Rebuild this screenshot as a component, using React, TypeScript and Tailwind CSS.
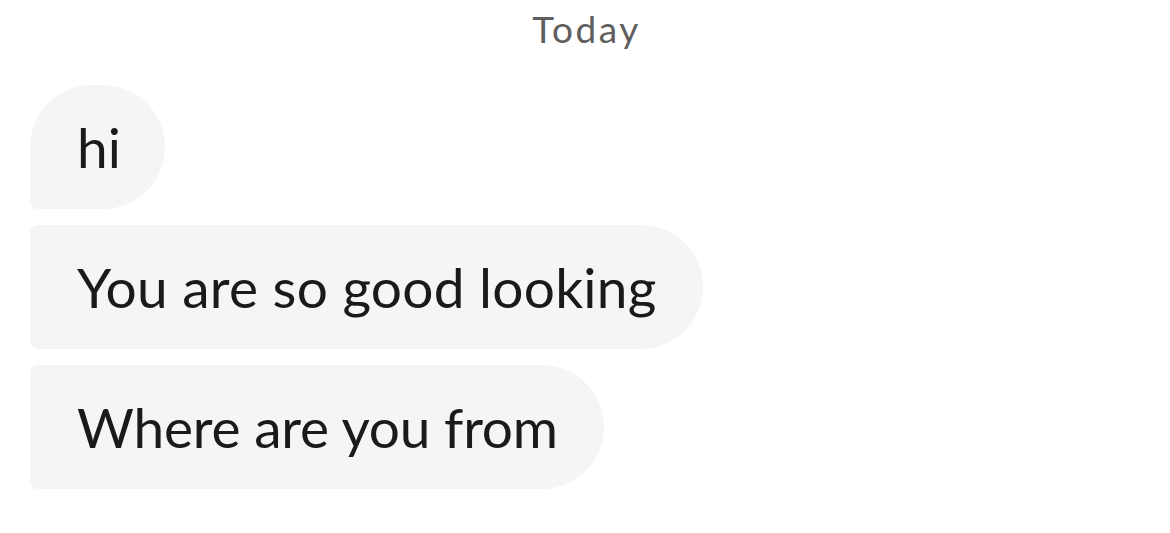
import React from "react";

export default function App() {
  const font = { fontFamily: "Lato, 'Noto Sans', sans-serif" };
  return (
    <div className="w-[1170px] h-[533px] bg-white overflow-hidden" style={font}>
      <div className="flex justify-center pt-[3px] pl-[3px] h-[85px]">
        <span className="text-[37px] leading-[52px] tracking-[2.5px] text-[#5f5f5f]">Today</span>
      </div>
      <div className="flex flex-col items-start gap-[16px] pl-[30px]">
        <div className="h-[124px] flex items-center pl-[47px] pr-[44px] bg-[#f5f5f5] rounded-tl-[62px] rounded-bl-[8px] rounded-r-[62px]">
          <span className="text-[55px] text-[#1a1a1a] leading-none">hi</span>
        </div>
        <div className="h-[124px] flex items-center pl-[47px] pr-[46px] bg-[#f5f5f5] rounded-l-[8px] rounded-r-[62px]">
          <span className="text-[55px] text-[#1a1a1a] leading-none tracking-[0.25px]">You are so good looking</span>
        </div>
        <div className="h-[124px] flex items-center pl-[47px] pr-[46px] bg-[#f5f5f5] rounded-l-[8px] rounded-r-[62px]">
          <span className="text-[55px] text-[#1a1a1a] leading-none tracking-[-0.2px]">Where are you from</span>
        </div>
      </div>
    </div>
  );
}
